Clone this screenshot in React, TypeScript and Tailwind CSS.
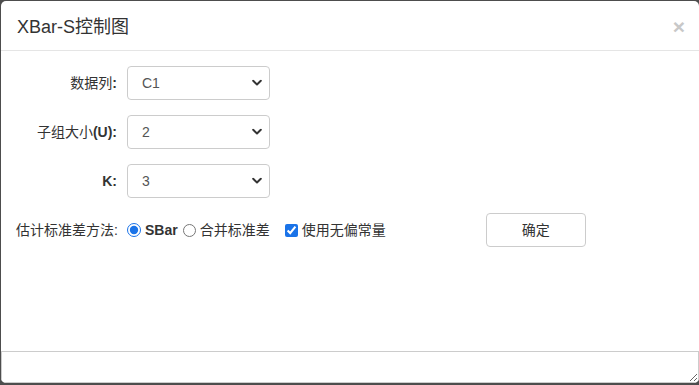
import React, { useState } from 'react';

const font = { fontFamily: '"Liberation Sans", "Noto Sans CJK SC", sans-serif' };

const Chevron = () => (
  <svg width="10" height="7" viewBox="0 0 10 7" className="pointer-events-none absolute right-[8px] top-1/2 -translate-y-1/2">
    <path d="M1.2 1.3 L5 5 L8.8 1.3" fill="none" stroke="#333" strokeWidth="2" strokeLinecap="round" strokeLinejoin="round" />
  </svg>
);

interface SelectRowProps {
  label: React.ReactNode;
  value: string;
  options: string[];
  onChange: (v: string) => void;
}

const SelectRow: React.FC<SelectRowProps> = ({ label, value, options, onChange }) => (
  <div className="flex items-center h-[34px]">
    <div className="w-[101px] text-right text-[14px] text-[#333] whitespace-nowrap">{label}</div>
    <div className="relative ml-[10px] w-[143px] h-[34px]">
      <select
        value={value}
        onChange={(e) => onChange(e.target.value)}
        className="appearance-none w-full h-full border border-[#ccc] rounded-[4px] bg-white pl-[14px] text-[14px] text-[#555] outline-none"
        style={font}
      >
        {options.map((o) => (
          <option key={o} value={o}>{o}</option>
        ))}
      </select>
      <Chevron />
    </div>
  </div>
);

export default function App() {
  const [column, setColumn] = useState('C1');
  const [size, setSize] = useState('2');
  const [k, setK] = useState('3');
  const [method, setMethod] = useState('sbar');
  const [unbiased, setUnbiased] = useState(true);

  return (
    <div className="w-[699px] h-[385px] bg-[#4d4d4d] pl-[1px] pt-[1px] overflow-hidden" style={font}>
      <div className="w-[698px] h-[382px] bg-white rounded-[5px] flex flex-col overflow-hidden">
        {/* Header */}
        <div className="h-[50px] shrink-0 border-b border-[#e5e5e5] flex items-center justify-between pl-[16px] pr-[14px] pt-[3px]">
          <h4 className="text-[18px] text-[#333] leading-none">XBar-S控制图</h4>
          <button className="text-[21px] font-bold leading-none text-[#c8c8c8] -mt-[2px]">×</button>
        </div>

        {/* Body */}
        <div className="flex-1 pt-[15px] pl-[15px] flex flex-col gap-[15px]">
          <SelectRow
            label={<>数据列<b>:</b></>}
            value={column}
            options={['C1', 'C2', 'C3']}
            onChange={setColumn}
          />
          <SelectRow
            label={<>子组大小<b>(U):</b></>}
            value={size}
            options={['2', '3', '4', '5']}
            onChange={setSize}
          />
          <SelectRow
            label={<b>K:</b>}
            value={k}
            options={['1', '2', '3', '4']}
            onChange={setK}
          />

          <div className="flex items-center h-[34px] text-[14px] text-[#333]">
            <div className="w-[101px] text-right whitespace-nowrap">估计标准差方法:</div>
            <label className="flex items-center ml-[10px]">
              <input
                type="radio"
                name="method"
                checked={method === 'sbar'}
                onChange={() => setMethod('sbar')}
                className="w-[14px] h-[14px] m-0 accent-[#1a73e8]"
              />
              <b className="ml-[4px]">SBar</b>
            </label>
            <label className="flex items-center ml-[5px]">
              <input
                type="radio"
                name="method"
                checked={method === 'pooled'}
                onChange={() => setMethod('pooled')}
                className="w-[13px] h-[13px] m-0 accent-[#1a73e8]"
              />
              <span className="ml-[4px]">合并标准差</span>
            </label>
            <label className="flex items-center ml-[15px]">
              <input
                type="checkbox"
                checked={unbiased}
                onChange={(e) => setUnbiased(e.target.checked)}
                className="w-[13px] h-[13px] m-0 accent-[#1a73e8]"
              />
              <span className="ml-[4px]">使用无偏常量</span>
            </label>
            <button className="ml-[100px] w-[100px] h-[34px] border border-[#ccc] rounded-[4px] bg-white text-[14px] text-[#333]">
              确定
            </button>
          </div>
        </div>

        {/* Output */}
        <textarea
          readOnly
          className="h-[32px] w-full shrink-0 border border-[#ccc] outline-none block"
          style={font}
        />
      </div>
    </div>
  );
}
